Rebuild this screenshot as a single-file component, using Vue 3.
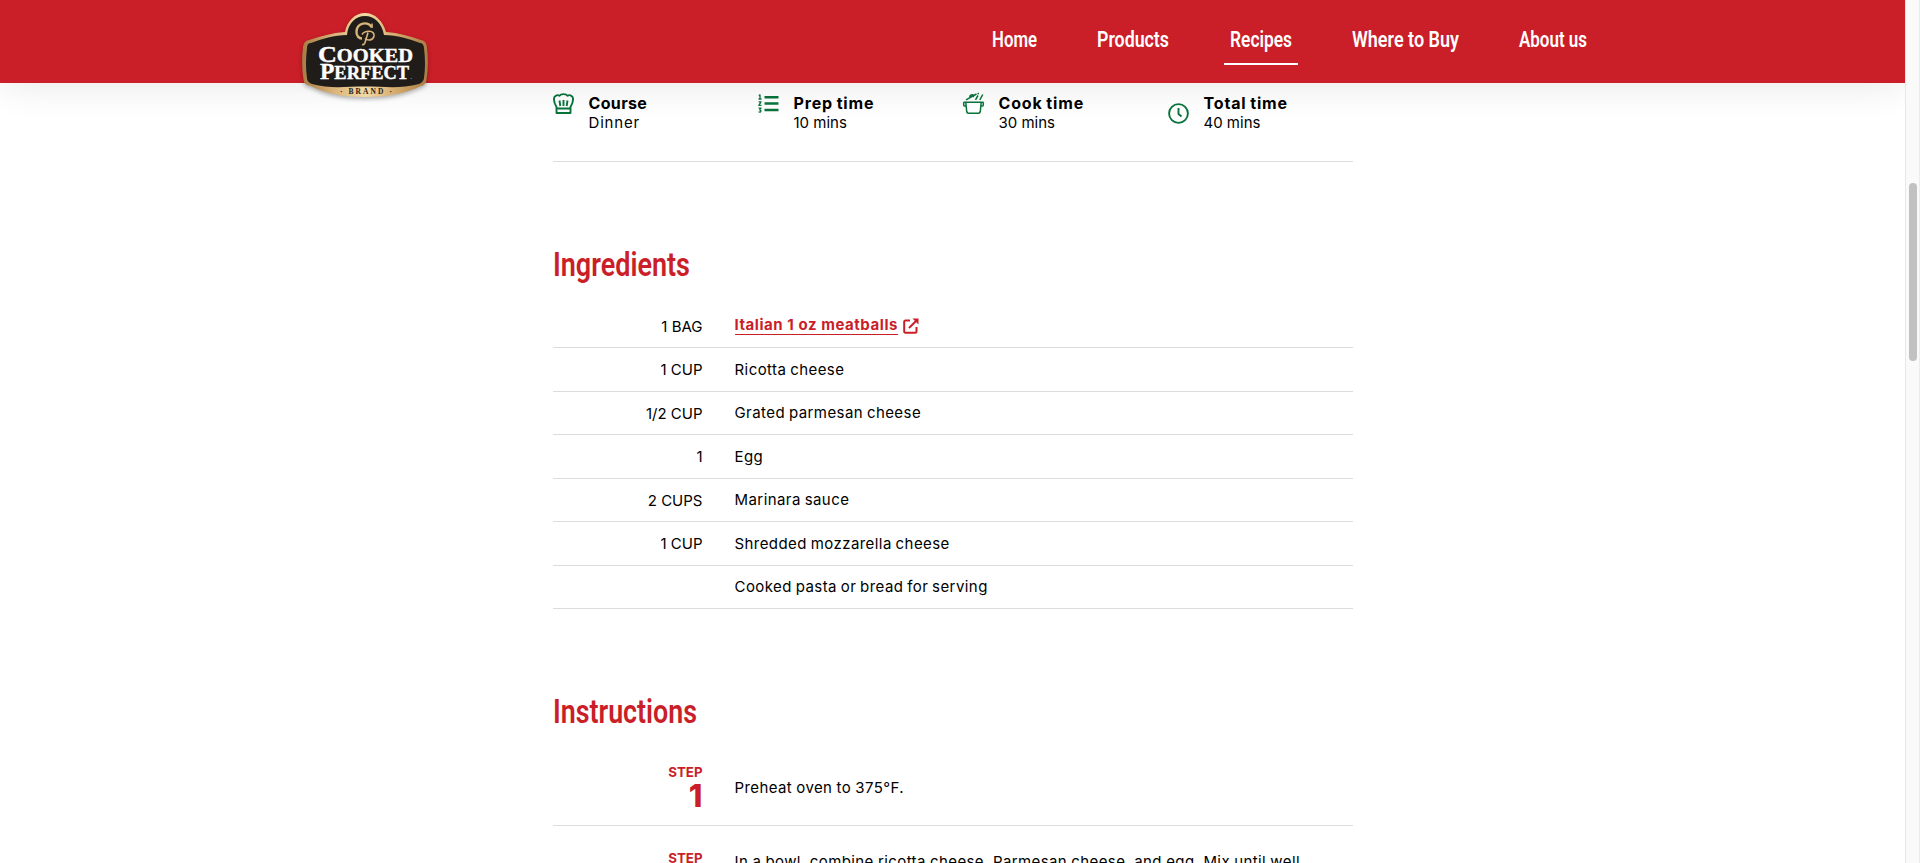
<script setup>
import { ref } from "vue";

const links = ref([
  { label: "Home", width: 45 },
  { label: "Products", width: 72 },
  { label: "Recipes", width: 62, active: true },
  { label: "Where to Buy", width: 107 },
  { label: "About us", width: 68 },
]);

const details = ref([
  { icon: "chef", label: "Course", value: "Dinner" },
  { icon: "list", label: "Prep time", value: "10 mins" },
  { icon: "pot", label: "Cook time", value: "30 mins" },
  { icon: "clock", label: "Total time", value: "40 mins" },
]);

const ingredients = ref([
  { amount: "1 BAG", name: "Italian 1 oz meatballs", link: true },
  { amount: "1 CUP", name: "Ricotta cheese" },
  { amount: "1/2 CUP", name: "Grated parmesan cheese" },
  { amount: "1", name: "Egg" },
  { amount: "2 CUPS", name: "Marinara sauce" },
  { amount: "1 CUP", name: "Shredded mozzarella cheese" },
  { amount: "", name: "Cooked pasta or bread for serving" },
]);

const steps = ref([
  "Preheat oven to 375°F.",
  "In a bowl, combine ricotta cheese, Parmesan cheese, and egg. Mix until well combined.",
]);
</script>

<template>
  <div class="page">
    <header class="header">
      <a href="#" class="logo">
        <svg width="136" height="96" viewBox="0 0 136 96">
          <defs>
            <linearGradient id="gold" x1="0" y1="0" x2="1" y2="0">
              <stop offset="0" stop-color="#a87b42" />
              <stop offset="0.25" stop-color="#d9b47a" />
              <stop offset="0.5" stop-color="#f3d9a4" />
              <stop offset="0.75" stop-color="#d3aa6c" />
              <stop offset="1" stop-color="#a87b42" />
            </linearGradient>
          </defs>
          <path
            class="badge"
            fill="url(#gold)"
            d="M48 27C50 16 58 8 68 8S86 16 89 27C102 28 113 31 124 35Q129.500 36 130 42Q132 59 129.500 75Q129 80 124 81C108 89 88 92 68 92S28 89 14 81Q7 80 6.500 75Q4 59 6 42Q6.500 36 12 35C24 31 35 28 48 27Z"
          />
          <path
            fill="#1f1c1a"
            d="M50 30C51 18 59 11 68 11S85 18 87 30C100 30 112 34 123 38Q126.500 38 127 43Q129 59 127 73Q126.500 77 122 79C103 84 88 81.500 68 81.500S33 84 15 79Q10 77 10 73Q8 59 10 43Q10 38 14 38C25 34 37 30 50 30Z"
          />
          <path class="mono" d="M74.500 22C71 16.500 60.500 17 59.500 26C59 31 62 33.500 65 33.500" />
          <path class="mono thin" d="M75 18.500V23M65 29.500C68 25 78 25 77 31C76 35.500 71 36 68 33.500M71 27.500L68.500 36Q67.500 40.500 65 39.500" />
          <text class="word" x="21" y="57" textLength="95" lengthAdjust="spacingAndGlyphs"><tspan class="big">C</tspan>OOKED</text>
          <text class="word" x="23" y="74" textLength="89" lengthAdjust="spacingAndGlyphs"><tspan class="big">P</tspan>ERFECT</text>
          <text class="reg" x="113" y="74">.</text>
          <text class="brand" x="43" y="88.500" textLength="52">· BRAND ·</text>
        </svg>
      </a>

      <nav class="nav">
        <a v-for="link in links" :key="link.label" href="#" :class="{ active: link.active }">
          <svg :width="link.width" height="30">
            <text x="0" y="23" :textLength="link.width" lengthAdjust="spacingAndGlyphs">{{ link.label }}</text>
          </svg>
        </a>
      </nav>
    </header>

    <main class="recipe">
      <ul class="details">
        <li v-for="item in details" :key="item.label" :class="item.icon">
          <svg v-if="item.icon === 'chef'" class="icon" viewBox="0 0 21 21">
            <path d="M3.500 20V14C2 11.500 .9 9.500 .9 6C1 2.500 4.500 1.300 6.500 2.800C8 .5 13 .5 14.500 2.800C16.500 1.300 20 2.500 20.100 6C20.100 9.500 19 11.500 17.500 14V20ZM3.500 15.500H17.500M7.300 13L6.500 7.500M10.500 13V7M13.700 13L14.500 7.500" />
          </svg>
          <svg v-else-if="item.icon === 'list'" class="icon" viewBox="0 0 21 21">
            <path class="bars" d="M6.500 4.300H20.500M6.500 10.500H20.500M6.500 17H20.500" />
            <path class="nums" d="M.8 2.600L2 1.900V6M.5 6H3.500M.6 8.800H3L.8 12.300H3.500M.6 15.100H3L1.700 16.900Q3.300 17 2.800 18.500Q2 19.600 .5 18.800" />
          </svg>
          <svg v-else-if="item.icon === 'pot'" class="icon thin" viewBox="0 0 21 21">
            <path d="M.5 9.200H20.500M2.800 9.200L3.700 18.500Q4 20.200 5.500 20.200H15.500Q17 20.200 17.300 18.500L18.200 9.200M2.800 13H1.500Q.7 13 .7 12V9.200M18.200 13H19.500Q20.300 13 20.300 12V9.200M3 6.800L13.500 1M7 5.200Q6.300 2 9 1.800Q11.500 2 10 4M12.500 6.800L15 2.500M16.800 6.800L19.800 1.500M14.500 .8L16 .5" />
          </svg>
          <svg v-else class="icon" viewBox="0 0 21 21">
            <circle cx="10.500" cy="10.500" r="9.400" />
            <path d="M10.500 5V11L13.500 13.500" />
          </svg>
          <div>
            <strong>{{ item.label }}</strong>
            <span>{{ item.value }}</span>
          </div>
        </li>
      </ul>

      <h2 class="title">
        <svg width="140" height="44">
          <text x="0" y="33" textLength="137" lengthAdjust="spacingAndGlyphs">Ingredients</text>
        </svg>
      </h2>
      <ul class="ingredients">
        <li v-for="item in ingredients" :key="item.name">
          <span class="amount">{{ item.amount }}</span>
          <a v-if="item.link" href="#" class="product">
            <span>{{ item.name }}</span>
            <svg width="16" height="16" viewBox="0 0 16 16">
              <path d="M7 2.500H2.500Q1.200 2.500 1.200 3.800V13.500Q1.200 14.800 2.500 14.800H12.200Q13.500 14.800 13.500 13.500V9" />
              <path d="M6 10L14 2" />
              <path class="tip" d="M9.500 .5H15.500V6.500Z" />
            </svg>
          </a>
          <span v-else class="name">{{ item.name }}</span>
        </li>
      </ul>

      <h2 class="title second">
        <svg width="150" height="44">
          <text x="0" y="33" textLength="144" lengthAdjust="spacingAndGlyphs">Instructions</text>
        </svg>
      </h2>
      <ol class="steps">
        <li v-for="(step, index) in steps" :key="index">
          <div class="number">
            <span>STEP</span>
            <strong>{{ index + 1 }}</strong>
          </div>
          <p>{{ step }}</p>
        </li>
      </ol>
    </main>

    <div class="scrollbar">
      <div class="thumb"></div>
    </div>
  </div>
</template>

<style>
body {
  overflow: hidden;
}
</style>

<style scoped>
.page {
  position: relative;
  height: 863px;
  box-sizing: border-box;
  overflow: hidden;
  padding-right: 15px;
  background: #fff;
  color: #000;
  font-family: Inter, "Open Sans", sans-serif;
  font-size: 15px;
}

ul,
ol {
  list-style: none;
  margin: 0;
  padding: 0;
}

svg {
  display: block;
  overflow: visible;
}

.header {
  position: relative;
  z-index: 2;
  height: 83px;
  box-sizing: border-box;
  padding: 0 312px 0 297px;
  display: flex;
  justify-content: space-between;
  align-items: flex-start;
  background: #ca1e28;
  box-shadow: 0 0 40px rgba(0, 0, 0, 0.11);
}

.logo {
  padding-top: 5px;
}

.badge {
  filter: drop-shadow(0 2px 2px rgba(0, 0, 0, 0.3));
}

.mono {
  fill: none;
  stroke: #d9b47a;
  stroke-width: 2.4;
}

.mono.thin {
  stroke-width: 1.6;
}

.word {
  fill: #fff;
  stroke: #fff;
  stroke-width: 0.4;
  font: bold 18px "Liberation Serif", serif;
}

.big {
  font-size: 23px;
}

.reg {
  fill: #999;
  font-size: 8px;
}

.brand {
  fill: #2b2118;
  font: bold 7.5px "Liberation Serif", serif;
}

.nav {
  display: flex;
  gap: 48.2px;
  padding-top: 24px;
}

.nav a {
  padding: 0 6px 9px;
  border-bottom: 2px solid transparent;
}

.nav a.active {
  border-color: #fff;
}

.nav text {
  fill: #fff;
  font: 600 22.5px Roboto, sans-serif;
}

.recipe {
  width: 800px;
  margin: 0 auto;
}

.details {
  display: grid;
  grid-template-columns: repeat(4, 185px);
  column-gap: 20px;
  height: 79px;
  box-sizing: border-box;
  padding-top: 10px;
  border-bottom: 1px solid #dcdcdc;
}

.details li {
  display: flex;
  align-items: flex-start;
  gap: 15px;
  height: 40px;
}

.details .clock {
  align-items: center;
}

.details strong,
.details span {
  display: block;
  line-height: 20px;
}

.details strong {
  font-size: 16px;
  letter-spacing: 0.85px;
  word-spacing: -1px;
}

.details .chef strong {
  letter-spacing: 0.35px;
}

.details .chef span {
  letter-spacing: 0.8px;
}

.icon {
  width: 21px;
  height: 21px;
  fill: none;
  stroke: #08743c;
  stroke-width: 1.9;
  stroke-linejoin: round;
}

.icon.thin {
  stroke-width: 1.5;
}

.bars {
  stroke-width: 2.4;
}

.nums {
  stroke-width: 1.3;
}

.title {
  margin: 81px 0 0;
}

.title.second {
  margin-top: 80.25px;
}

.title text {
  fill: #ca1e28;
  font: 600 34px Roboto, sans-serif;
}

.ingredients {
  padding-top: 17.75px;
}

.ingredients li {
  display: flex;
  align-items: center;
  height: 43.5px;
  box-sizing: border-box;
  padding-bottom: 1px;
  border-bottom: 1px solid #dcdcdc;
}

.amount {
  width: 150px;
  margin-right: 32px;
  padding-top: 1px;
  text-align: right;
}

.name {
  letter-spacing: 0.43px;
  word-spacing: -0.8px;
}

.product {
  display: flex;
  align-items: center;
  gap: 5px;
  color: #ca1e28;
  font-weight: 700;
  letter-spacing: 0.55px;
  text-decoration: none;
}

.product span {
  border-bottom: 1px solid #ca1e28;
  line-height: 18px;
}

.product svg {
  fill: none;
  stroke: #ca1e28;
  stroke-width: 2;
}

.product .tip {
  fill: #ca1e28;
  stroke: none;
}

.steps {
  padding-top: 7px;
}

.steps li {
  display: flex;
  align-items: center;
  padding: 24px 0 14px;
  border-bottom: 1px solid #dcdcdc;
}

.number {
  flex: none;
  width: 150px;
  margin-right: 32px;
  color: #ca1e28;
  text-align: right;
}

.number span {
  display: block;
  font-size: 13.3px;
  font-weight: 700;
  line-height: 15px;
}

.number strong {
  display: block;
  font-size: 31px;
  font-weight: 800;
  line-height: 31px;
}

.steps p {
  margin: 0;
  letter-spacing: 0.4px;
  word-spacing: -0.4px;
  line-height: 24px;
}

/* browser scrollbar */
.scrollbar {
  position: absolute;
  top: 0;
  right: 0;
  z-index: 3;
  width: 15px;
  height: 863px;
  box-sizing: border-box;
  padding: 183px 2px 0 3px;
  border-left: 1px solid #e7e7e7;
  border-right: 1px solid #ececec;
  background: #fafafa;
}

.thumb {
  width: 8px;
  height: 178px;
  border-radius: 4px;
  background: #c1c1c1;
}
</style>
